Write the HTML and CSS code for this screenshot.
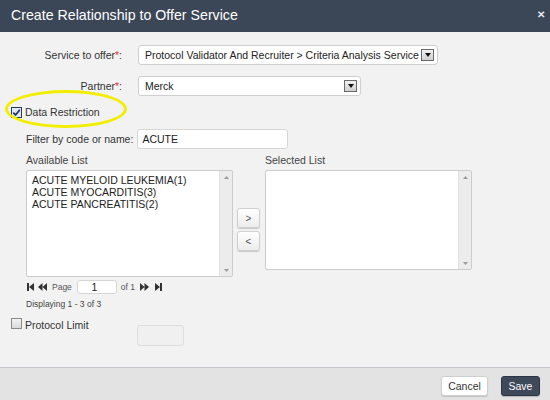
FILE: index.html
```html
<!DOCTYPE html>
<html>
<head>
<meta charset="utf-8">
<link rel="stylesheet" href="styles.css">
</head>
<body>
<div class="dialog">
  <div class="header">
    <span class="title">Create Relationship to Offer Service</span>
    <span class="close">&#x2715;</span>
  </div>
  <div class="content">
    <div class="form-row">
      <span class="label">Service to offer<span class="req">*</span>:</span>
      <div class="select select-service">
        <span class="select-text">Protocol Validator And Recruiter &gt; Criteria Analysis Service</span>
        <span class="drop"><svg width="6" height="4" viewBox="0 0 6 4"><path d="M0 0H6L3 4Z" fill="#111"/></svg></span>
      </div>
    </div>
    <div class="form-row row-partner">
      <span class="label">Partner<span class="req">*</span>:</span>
      <div class="select select-partner">
        <span class="select-text">Merck</span>
        <span class="drop"><svg width="6" height="4" viewBox="0 0 6 4"><path d="M0 0H6L3 4Z" fill="#111"/></svg></span>
      </div>
    </div>
    <div class="check-row row-restrict">
      <svg class="cb" width="11" height="11" viewBox="0 0 11 11"><rect x="0.5" y="0.5" width="10" height="10" fill="#dfe8f5" stroke="#2b3a55"/><path d="M2.3 5.6L4.6 8L8.8 2.8" fill="none" stroke="#1c2f6b" stroke-width="1.7"/></svg>
      <span class="check-label">Data Restriction</span>
    </div>
    <div class="filter-row">
      <span class="filter-label">Filter by code or name:</span>
      <div class="input filter-input">ACUTE</div>
    </div>
    <div class="lists">
      <div class="list-col">
        <div class="list-title">Available List</div>
        <div class="listbox listbox-avail">
          <div class="items">
            <div>ACUTE MYELOID LEUKEMIA(1)</div>
            <div>ACUTE MYOCARDITIS(3)</div>
            <div>ACUTE PANCREATITIS(2)</div>
          </div>
          <div class="scroll">
            <svg width="5" height="3" viewBox="0 0 5 3"><path d="M0 3H5L2.5 0Z" fill="#9a9a9a"/></svg>
            <svg width="5" height="3" viewBox="0 0 5 3"><path d="M0 0H5L2.5 3Z" fill="#9a9a9a"/></svg>
          </div>
        </div>
      </div>
      <div class="mover">
        <button class="mv">&gt;</button>
        <button class="mv">&lt;</button>
      </div>
      <div class="list-col">
        <div class="list-title">Selected List</div>
        <div class="listbox listbox-sel">
          <div class="items"></div>
          <div class="scroll">
            <svg width="5" height="3" viewBox="0 0 5 3"><path d="M0 3H5L2.5 0Z" fill="#9a9a9a"/></svg>
            <svg width="5" height="3" viewBox="0 0 5 3"><path d="M0 0H5L2.5 3Z" fill="#9a9a9a"/></svg>
          </div>
        </div>
      </div>
    </div>
    <div class="pager">
      <svg class="pg" width="7" height="8" viewBox="0 0 7 8"><rect x="0" y="0" width="2" height="8" fill="#333"/><path d="M7 0V8L2 4Z" fill="#333"/></svg>
      <svg class="pg pg-prev" width="9" height="8" viewBox="0 0 9 8"><path d="M4.5 0V8L0 4Z M9 0V8L4.5 4Z" fill="#333"/></svg>
      <span class="pg-text">Page</span>
      <div class="input page-input">1</div>
      <span class="pg-text">of 1</span>
      <svg class="pg pg-next" width="9" height="8" viewBox="0 0 9 8"><path d="M0 0V8L4.5 4Z M4.5 0V8L9 4Z" fill="#333"/></svg>
      <svg class="pg pg-last" width="7" height="8" viewBox="0 0 7 8"><path d="M0 0V8L5 4Z" fill="#333"/><rect x="5" y="0" width="2" height="8" fill="#333"/></svg>
    </div>
    <div class="displaying">Displaying 1 - 3 of 3</div>
    <div class="check-row row-protocol">
      <svg class="cb" width="11" height="11" viewBox="0 0 11 11"><defs><linearGradient id="g" x1="0" y1="0" x2="0" y2="1"><stop offset="0" stop-color="#f4f4f4"/><stop offset="1" stop-color="#d8d8d8"/></linearGradient></defs><rect x="0.5" y="0.5" width="10" height="10" fill="url(#g)" stroke="#8a8a8a"/></svg>
      <span class="check-label">Protocol Limit</span>
      <div class="input protocol-input"></div>
    </div>
  </div>
  <div class="footer">
    <button class="btn btn-cancel">Cancel</button>
    <button class="btn btn-save">Save</button>
  </div>
  <div class="highlight"></div>
</div>
</body>
</html>
```

FILE: styles.css
```css
html, body {
  margin: 0;
  padding: 0;
}
body {
  font-family: "Liberation Sans", Arial, sans-serif;
  color: #333;
  font-size: 10.5px;
}
.dialog {
  position: relative;
  width: 550px;
  height: 400px;
  display: flex;
  flex-direction: column;
  overflow: hidden;
}
.header {
  height: 32px;
  flex: none;
  background: #3b4657;
  color: #fff;
  display: flex;
  align-items: center;
  justify-content: space-between;
  padding: 0 5px 2px 11px;
  box-sizing: border-box;
}
.title {
  font-size: 14.2px;
}
.close {
  font-size: 10px;
  font-weight: bold;
  color: #e8e8e8;
  margin-bottom: 2px;
}
.content {
  flex: 1;
  background: #f2f2f2;
  padding-top: 13px;
  box-sizing: border-box;
}
.form-row {
  display: flex;
  align-items: center;
  height: 20px;
}
.row-partner {
  margin-top: 11px;
}
.label {
  width: 122px;
  text-align: right;
  margin-right: 16px;
  color: #333;
}
.req {
  color: #e03030;
}
.select {
  height: 20px;
  box-sizing: border-box;
  background: #fff;
  border: 1px solid #cfcfcf;
  border-radius: 3px;
  display: flex;
  align-items: center;
  justify-content: space-between;
  padding: 0 3px 0 6px;
}
.select-service {
  width: 300px;
}
.select-partner {
  width: 223px;
}
.select-text {
  color: #222;
  white-space: nowrap;
}
.drop {
  width: 13px;
  height: 12px;
  box-sizing: border-box;
  border: 1px solid #6a6a6a;
  background: linear-gradient(#f2f2f2, #cfcfcf);
  display: flex;
  align-items: center;
  justify-content: center;
}
.check-row {
  display: flex;
  align-items: center;
  padding-left: 11px;
  height: 14px;
}
.row-restrict {
  margin-top: 9px;
}
.cb {
  flex: none;
}
.check-label {
  margin-left: 3px;
  font-size: 10.5px;
  color: #333;
}
.filter-row {
  display: flex;
  align-items: center;
  margin-top: 10px;
  padding-left: 26px;
  height: 20px;
}
.filter-label {
  margin-right: 4px;
}
.input {
  box-sizing: border-box;
  background: #fff;
  border: 1px solid #d6d6d6;
  border-radius: 3px;
}
.filter-input {
  width: 151px;
  height: 20px;
  padding-left: 4px;
  line-height: 18px;
  color: #222;
}
.lists {
  display: flex;
  margin-top: 4px;
  padding-left: 26px;
}
.list-col {
  width: 207px;
}
.list-title {
  height: 14px;
  line-height: 14px;
  margin-bottom: 3px;
  color: #444;
}
.listbox {
  box-sizing: border-box;
  background: #fff;
  border: 1px solid #cccccc;
  border-radius: 2px;
  display: flex;
}
.listbox-avail {
  height: 107px;
}
.listbox-sel {
  height: 100px;
}
.items {
  flex: 1;
  padding: 3px 0 0 5px;
  line-height: 12px;
  color: #222;
}
.scroll {
  width: 13px;
  background: #ececec;
  border-left: 1px solid #e2e2e2;
  display: flex;
  flex-direction: column;
  justify-content: space-between;
  align-items: center;
  padding: 5px 0 4px;
  box-sizing: border-box;
}
.mover {
  display: flex;
  flex-direction: column;
  gap: 3px;
  padding-top: 55px;
  margin: 0 5px 0 4px;
}
.mv {
  width: 23px;
  height: 20px;
  padding: 0;
  font-family: "Liberation Sans", Arial, sans-serif;
  font-size: 10px;
  color: #555;
  background: linear-gradient(#ffffff, #ececec);
  border: 1px solid #d0d0d0;
  border-radius: 3px;
  box-shadow: 0 1px 1px rgba(0,0,0,0.18);
}
.pager {
  display: flex;
  align-items: center;
  height: 14px;
  margin-top: 3px;
  padding-left: 27px;
}
.pg-prev {
  margin-left: 4px;
  margin-right: 5px;
}
.pg-text {
  font-size: 8.5px;
  color: #555;
}
.page-input {
  width: 40px;
  height: 14px;
  margin: 0 4px 0 5px;
  text-align: center;
  line-height: 12px;
  font-size: 10.5px;
  color: #222;
  padding-right: 5px;
}
.pg-next {
  margin-left: 5px;
  margin-right: 6px;
}
.displaying {
  margin-top: 4px;
  height: 12px;
  line-height: 12px;
  padding-left: 26px;
  font-size: 8.5px;
  color: #444;
}
.row-protocol {
  margin-top: 8px;
  align-items: flex-start;
}
.row-protocol .check-label {
  line-height: 14px;
}
.protocol-input {
  width: 47px;
  height: 21px;
  margin-top: 7px;
  margin-left: 48px;
  background: #f0f0f0;
  border-color: #dedede;
}
.footer {
  height: 33px;
  flex: none;
  background: #e3e3e3;
  border-top: 1px solid #c4c8cc;
  box-sizing: border-box;
  display: flex;
  justify-content: flex-end;
  align-items: flex-start;
  padding: 8px 10px 0 0;
  gap: 13px;
}
.btn {
  font-family: "Liberation Sans", Arial, sans-serif;
  font-size: 10.5px;
  height: 20px;
  padding: 0;
  border-radius: 3px;
}
.btn-cancel {
  width: 47px;
  background: #fff;
  color: #333;
  border: 1px solid #cfcfcf;
  box-shadow: 0 1px 1px rgba(0,0,0,0.15);
}
.btn-save {
  width: 39px;
  background: #3e4959;
  color: #fff;
  border: 1px solid #2d3644;
  box-shadow: 0 1px 1px rgba(0,0,0,0.2);
}
.highlight {
  position: absolute;
  left: 5px;
  top: 90px;
  width: 122px;
  height: 38px;
  box-sizing: border-box;
  border: 3px solid #f3ee00;
  border-radius: 50%;
  pointer-events: none;
}
```
